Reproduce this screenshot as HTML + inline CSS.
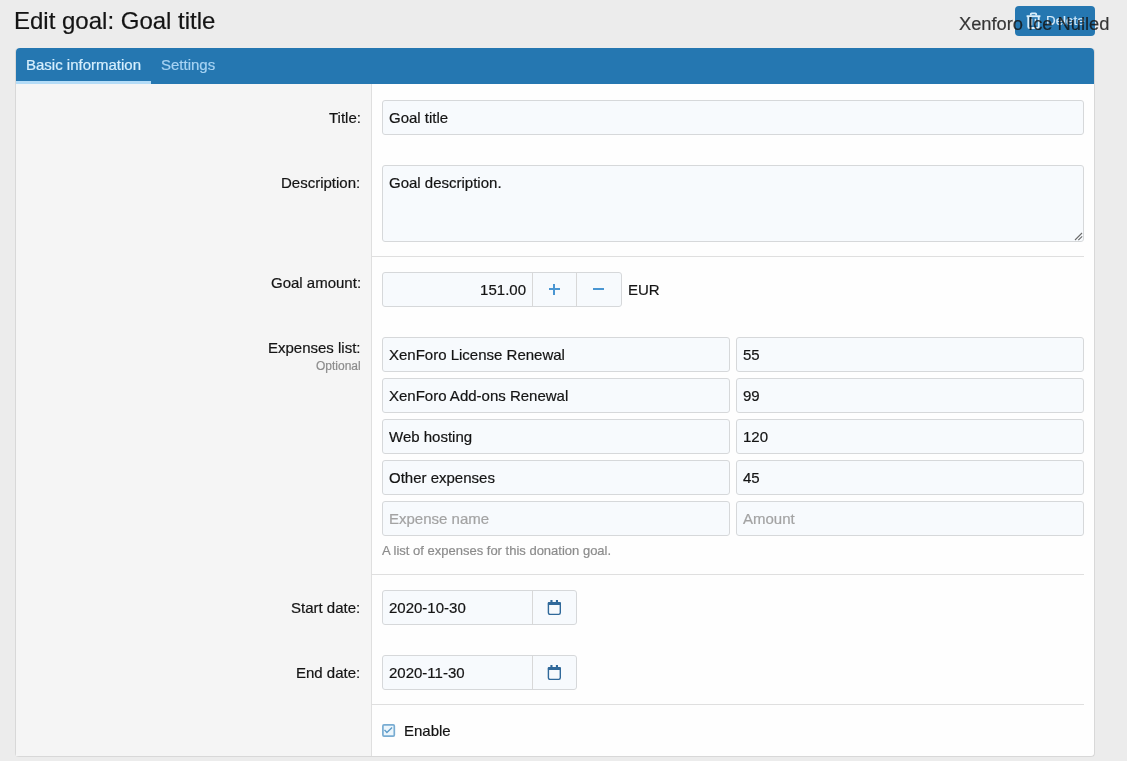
<!DOCTYPE html>
<html><head><meta charset="utf-8">
<style>
*{box-sizing:border-box;margin:0;padding:0}
html,body{width:1127px;height:761px;overflow:hidden;background:#ececec;font-family:"Liberation Sans",sans-serif;color:#141414;-webkit-text-stroke:0.2px currentColor}
.abs{position:absolute;will-change:transform}
.title{left:14px;top:5px;font-size:24px;line-height:32px;white-space:nowrap}
.btn{left:1015px;top:6px;width:80px;height:30px;background:#2577b1;border-radius:4px;color:#dff0fb;font-size:14px}
.wm{left:959px;top:12px;font-size:18.3px;line-height:24px;color:#141414;opacity:.85;white-space:nowrap}
.block{left:15px;top:48px;width:1080px;height:709px;background:#fefefe;border:1px solid #d8d8d8;border-top:none;border-radius:4px}
.tabs{left:16px;top:48px;width:1078px;height:36px;background:#2577b1;border-radius:4px 4px 0 0}
.tab{top:48px;height:33px;font-size:15px;line-height:33px;white-space:nowrap}
.dt{left:16px;top:84px;width:356px;height:672px;background:#f5f5f5;border-right:1px solid #dfdfdf}
.lbl{right:766.4px;font-size:15px;line-height:21px;text-align:right;white-space:nowrap}
.inp{background:#f7fafd;border:1px solid #d6d8da;border-radius:3px;font-size:15px;line-height:21px;padding:6px;height:35px;white-space:nowrap}
.sep{left:372px;width:712px;height:1px;background:#dfdfdf}
.ph{color:#a3a3a3}
.muted{color:#8c8c8c}
</style></head><body>
<div class="abs title">Edit goal: Goal title</div>
<div class="abs btn"><svg class="abs" style="left:11px;top:6px" width="15" height="17" viewBox="0 0 15 17"><path d="M4.8 3.6V2.2q0-.9.9-.9h3.6q.9 0 .9.9v1.4" fill="none" stroke="#d9eefb" stroke-width="1.8"/><path d="M0.6 4.2h13.8" stroke="#d9eefb" stroke-width="1.9"/><path d="M2.3 4.5v10.2q0 1.3 1.3 1.3h7.8q1.3 0 1.3-1.3V4.5" fill="none" stroke="#d9eefb" stroke-width="1.9"/><path d="M5.6 6.8v6.8M9.4 6.8v6.8" stroke="#d9eefb" stroke-width="1.5"/></svg><span class="abs" style="left:31px;top:6px;font-size:13.4px;line-height:18px;color:#d3eafa">Delete</span></div>
<div class="abs wm">Xenforo Ice Nulled</div>

<div class="abs block"></div>
<div class="abs tabs"></div>
<div class="abs tab" style="left:16px;width:135px;padding-left:10px;color:#d6effd">Basic information</div>
<div class="abs" style="left:16px;top:81px;width:135px;height:3px;background:#b4dcf7"></div>
<div class="abs tab" style="left:161px;color:#a7d3f3">Settings</div>

<div class="abs dt"></div>

<!-- Title -->
<div class="abs lbl" style="top:107px">Title:</div>
<div class="abs inp" style="left:382px;top:100px;width:702px">Goal title</div>

<!-- Description -->
<div class="abs lbl" style="top:172px">Description:</div>
<div class="abs inp" style="left:382px;top:165px;width:702px;height:77px">Goal description.</div>
<svg class="abs" style="left:1074px;top:232px" width="9" height="9" viewBox="0 0 9 9"><path d="M1 8L8 1M4.3 8.2L8.2 4.3" stroke="#6b6b6b" stroke-width="1.1"/></svg>

<div class="abs sep" style="top:256px"></div>

<!-- Goal amount -->
<div class="abs lbl" style="top:272px">Goal amount:</div>
<div class="abs inp" style="left:382px;top:272px;width:240px;padding:0"></div>
<div class="abs" style="left:383px;top:279px;width:143px;font-size:15px;line-height:21px;text-align:right">151.00</div>
<div class="abs" style="left:532px;top:273px;width:1px;height:33px;background:#d8d8d8"></div>
<div class="abs" style="left:576px;top:273px;width:1px;height:33px;background:#d8d8d8"></div>
<div class="abs" style="left:548.6px;top:288.3px;width:11.2px;height:1.6px;background:#4a96d2"></div>
<div class="abs" style="left:553.4px;top:283.7px;width:1.6px;height:11.2px;background:#4a96d2"></div>
<div class="abs" style="left:593.2px;top:288.3px;width:11.2px;height:1.6px;background:#4a96d2"></div>
<div class="abs" style="left:628px;top:279px;font-size:15px;line-height:21px">EUR</div>

<!-- Expenses -->
<div class="abs lbl" style="top:337px">Expenses list:</div>
<div class="abs lbl muted" style="top:357px;font-size:12px;line-height:18px">Optional</div>
<div class="abs inp" style="left:382px;top:337px;width:348px">XenForo License Renewal</div>
<div class="abs inp" style="left:736px;top:337px;width:348px">55</div>
<div class="abs inp" style="left:382px;top:378px;width:348px">XenForo Add-ons Renewal</div>
<div class="abs inp" style="left:736px;top:378px;width:348px">99</div>
<div class="abs inp" style="left:382px;top:419px;width:348px">Web hosting</div>
<div class="abs inp" style="left:736px;top:419px;width:348px">120</div>
<div class="abs inp" style="left:382px;top:460px;width:348px">Other expenses</div>
<div class="abs inp" style="left:736px;top:460px;width:348px">45</div>
<div class="abs inp ph" style="left:382px;top:501px;width:348px">Expense name</div>
<div class="abs inp ph" style="left:736px;top:501px;width:348px">Amount</div>
<div class="abs muted" style="left:382px;top:542px;font-size:13px;line-height:18px;white-space:nowrap">A list of expenses for this donation goal.</div>

<div class="abs sep" style="top:574px"></div>

<!-- Dates -->
<div class="abs lbl" style="top:597px">Start date:</div>
<div class="abs inp" style="left:382px;top:590px;width:195px">2020-10-30</div>
<div class="abs" style="left:532px;top:591px;width:1px;height:33px;background:#d8d8d8"></div>
<svg class="abs" style="left:547px;top:600px" width="15" height="16" viewBox="0 0 15 16"><rect x="1.4" y="2.75" width="11.9" height="11.6" rx="1.5" fill="none" stroke="#30699a" stroke-width="1.4"/><rect x="0.7" y="2" width="13.3" height="3.1" rx="1.3" fill="#30699a"/><rect x="3.4" y="0" width="2.1" height="3" fill="#30699a"/><rect x="8.9" y="0" width="2.1" height="3" fill="#30699a"/></svg>

<div class="abs lbl" style="top:662px">End date:</div>
<div class="abs inp" style="left:382px;top:655px;width:195px">2020-11-30</div>
<div class="abs" style="left:532px;top:656px;width:1px;height:33px;background:#d8d8d8"></div>
<svg class="abs" style="left:547px;top:665px" width="15" height="16" viewBox="0 0 15 16"><rect x="1.4" y="2.75" width="11.9" height="11.6" rx="1.5" fill="none" stroke="#30699a" stroke-width="1.4"/><rect x="0.7" y="2" width="13.3" height="3.1" rx="1.3" fill="#30699a"/><rect x="3.4" y="0" width="2.1" height="3" fill="#30699a"/><rect x="8.9" y="0" width="2.1" height="3" fill="#30699a"/></svg>

<div class="abs sep" style="top:704px"></div>

<svg class="abs" style="left:381px;top:723px" width="15" height="15" viewBox="0 0 15 15"><rect x="1.9" y="1.9" width="11.4" height="11.2" rx="1.1" fill="#ecf6fc" stroke="#78acd2" stroke-width="1.7"/><path d="M3.5 6.9l2.4 2.6 5.2-5.1" fill="none" stroke="#5c9bc9" stroke-width="1.4"/></svg>
<div class="abs" style="left:404px;top:720px;font-size:15px;line-height:21px">Enable</div>
</body></html>
